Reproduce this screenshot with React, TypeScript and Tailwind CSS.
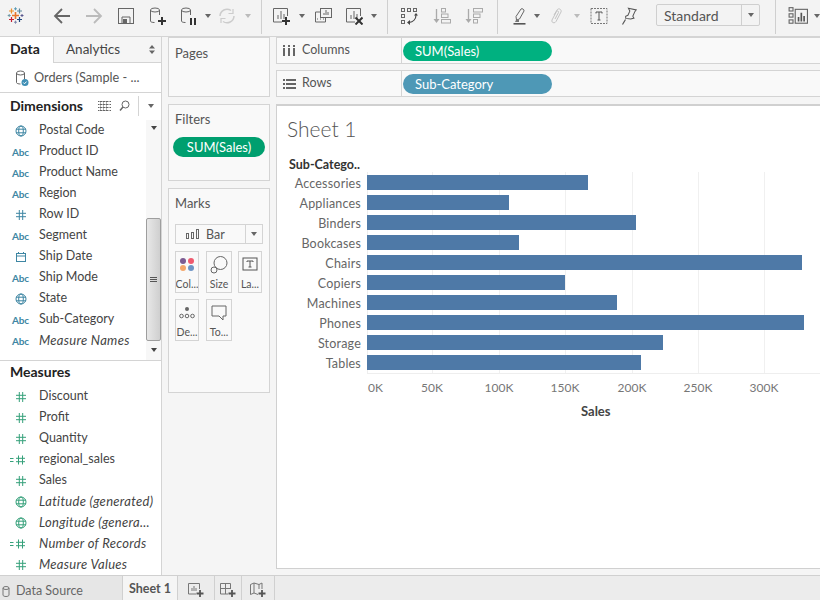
import type { ReactNode } from 'react'

const font = { fontFamily: '"Lato", "Open Sans", sans-serif' }

const bars = [
  { name: 'Accessories', w: 221 },
  { name: 'Appliances', w: 142 },
  { name: 'Binders', w: 269 },
  { name: 'Bookcases', w: 152 },
  { name: 'Chairs', w: 435 },
  { name: 'Copiers', w: 198 },
  { name: 'Machines', w: 250 },
  { name: 'Phones', w: 437 },
  { name: 'Storage', w: 296 },
  { name: 'Tables', w: 274 },
]

const ticks = [
  { label: '50K', x: 65 },
  { label: '100K', x: 132 },
  { label: '150K', x: 198 },
  { label: '200K', x: 265 },
  { label: '250K', x: 331 },
  { label: '300K', x: 397 },
]

type Kind = 'abc' | 'globe' | 'hash' | 'date' | 'calc'

const dimensions: { name: string; kind: Kind; italic?: boolean }[] = [
  { name: 'Postal Code', kind: 'globe' },
  { name: 'Product ID', kind: 'abc' },
  { name: 'Product Name', kind: 'abc' },
  { name: 'Region', kind: 'abc' },
  { name: 'Row ID', kind: 'hash' },
  { name: 'Segment', kind: 'abc' },
  { name: 'Ship Date', kind: 'date' },
  { name: 'Ship Mode', kind: 'abc' },
  { name: 'State', kind: 'globe' },
  { name: 'Sub-Category', kind: 'abc' },
  { name: 'Measure Names', kind: 'abc', italic: true },
]

const measures: { name: string; kind: Kind; italic?: boolean }[] = [
  { name: 'Discount', kind: 'hash' },
  { name: 'Profit', kind: 'hash' },
  { name: 'Quantity', kind: 'hash' },
  { name: 'regional_sales', kind: 'calc' },
  { name: 'Sales', kind: 'hash' },
  { name: 'Latitude (generated)', kind: 'globe', italic: true },
  { name: 'Longitude (genera...', kind: 'globe', italic: true },
  { name: 'Number of Records', kind: 'calc', italic: true },
  { name: 'Measure Values', kind: 'hash', italic: true },
]

function Icon({ children, cls = 'ml-[14px]', size = 18 }: { children: ReactNode; cls?: string; size?: number }) {
  return (
    <svg width={size} height={size} viewBox="0 0 18 18" fill="none" className={`shrink-0 ${cls}`}>
      {children}
    </svg>
  )
}

function Caret({ cls, color = '#666' }: { cls: string; color?: string }) {
  return (
    <svg width="6" height="4" viewBox="0 0 6 4" className={`shrink-0 ${cls}`}>
      <path d="M0 0h6L3 4z" fill={color} />
    </svg>
  )
}

function Sep({ cls }: { cls: string }) {
  return <div className={`w-px h-[34px] self-start bg-[#cfcfcf] shrink-0 ${cls}`} />
}

function Cyl({ stroke = '#666' }: { stroke?: string }) {
  return (
    <>
      <ellipse cx="6" cy="3" rx="4.5" ry="2" stroke={stroke} />
      <path d="M1.500 3v11c0 1 1.500 1.500 4 1.500" stroke={stroke} />
      <path d="M10.500 3v5" stroke={stroke} />
    </>
  )
}

function BarsMini() {
  return <path d="M6 12V8M9 12V4M12 12V7" stroke="#666" />
}

function Plus({ x, y, r, color, w = 1.2 }: { x: number; y: number; r: number; color: string; w?: number }) {
  return <path d={`M${x} ${y - r}v${r * 2}M${x - r} ${y}h${r * 2}`} stroke={color} strokeWidth={w} />
}

function Toolbar() {
  return (
    <div className="h-[36px] flex items-center bg-[#f3f3f3] shrink-0 pb-[4px]">
      <svg width="18" height="18" viewBox="0 0 18 18" className="shrink-0 ml-[7px]">
        <Plus x={8.5} y={8.5} r={3.5} color="#e8762b" w={1.6} />
        <Plus x={4.5} y={4} r={2.5} color="#eb912c" />
        <Plus x={12.5} y={4} r={2.5} color="#5b879b" />
        <Plus x={4.5} y={12.5} r={2.5} color="#c72035" />
        <Plus x={12.5} y={12.5} r={2.5} color="#1f457e" />
        <Plus x={8.5} y={1.800} r={1.500} color="#5b9cb5" w={1} />
        <Plus x={2.200} y={8.500} r={1.500} color="#7099a6" w={1} />
        <Plus x={15} y={8.500} r={1.500} color="#59578e" w={1} />
        <Plus x={8.500} y={15.200} r={1.500} color="#7e86aa" w={1} />
      </svg>
      <Sep cls="ml-[14px]" />
      <Icon cls="ml-[13px]">
        <path d="M17 9H2M9 2 2 9l7 7" stroke="#666" strokeWidth="1.800" />
      </Icon>
      <Icon>
        <path d="M1 9h15M9 2l7 7-7 7" stroke="#bbb" strokeWidth="1.800" />
      </Icon>
      <Icon>
        <rect x="1.500" y="1.500" width="15" height="15" stroke="#666" />
        <path d="M5 16v-6h8v6" stroke="#666" />
        <rect x="6" y="12" width="4" height="4" fill="#666" />
      </Icon>
      <Icon>
        <Cyl />
        <path d="M13 10v8M9 14h8" stroke="#333" strokeWidth="2" />
      </Icon>
      <Icon cls="ml-[13px]">
        <Cyl />
        <path d="M11 11v7M15 11v7" stroke="#333" strokeWidth="2" />
      </Icon>
      <Caret cls="ml-[7px]" />
      <Icon cls="ml-[7px]">
        <path d="M2 9a7 7 0 0 1 11-5.500M16 9a7 7 0 0 1-11 5.500" stroke="#ccc" strokeWidth="1.500" />
        <path d="M15 2v4.500h-4.500M3 16v-4.500h4.500" stroke="#ccc" strokeWidth="1.200" />
      </Icon>
      <Caret cls="ml-[9px]" color="#bbb" />
      <Sep cls="ml-[10px]" />
      <Icon cls="ml-[10px]">
        <path d="M10 15H1.500V1.500h14V9" stroke="#666" />
        <BarsMini />
        <path d="M14 10v8M10 14h8" stroke="#333" strokeWidth="2" />
      </Icon>
      <Caret cls="ml-[9px]" />
      <Icon cls="ml-[9px]">
        <rect x="6.500" y="1.500" width="11" height="9" stroke="#666" fill="#f3f3f3" />
        <path d="M10 8V6M12 8V3M14 8V5" stroke="#666" />
        <path d="M6.500 5h-5v10h10v-4.500" stroke="#666" />
        <path d="M3 12h1M6 12h1M9 12h1" stroke="#666" />
      </Icon>
      <Icon cls="ml-[13px]">
        <path d="M10 15H1.500V1.500h14V9" stroke="#666" />
        <BarsMini />
        <path d="m10.500 10.500 7 7M17.500 10.500l-7 7" stroke="#333" strokeWidth="2" />
      </Icon>
      <Caret cls="ml-[8px]" />
      <Sep cls="ml-[10px]" />
      <Icon cls="ml-[12px]">
        <rect x="1.500" y="1.500" width="3" height="3" stroke="#666" />
        <rect x="7.500" y="1.500" width="3" height="3" stroke="#666" />
        <rect x="13.500" y="1.500" width="3" height="3" stroke="#666" />
        <rect x="1.500" y="7.500" width="3" height="3" stroke="#666" />
        <rect x="1.500" y="13.500" width="3" height="3" stroke="#666" />
        <path d="M16 8c0 4-3 7-7 7.500" stroke="#444" strokeWidth="1.200" />
        <path d="M14 8.500h4l-2-2.500zM10 13v5l-3-2.500z" fill="#444" />
      </Icon>
      <Icon cls="ml-[15px]">
        <path d="M3.500 2v12" stroke="#aaa" strokeWidth="1.300" />
        <path d="M.5 12h6l-3 4z" fill="#aaa" />
        <rect x="8.500" y="1.500" width="4" height="3.500" stroke="#aaa" />
        <rect x="8.500" y="7" width="6.500" height="3.500" stroke="#aaa" />
        <rect x="8.500" y="12.500" width="9" height="3.500" stroke="#aaa" />
      </Icon>
      <Icon>
        <path d="M3.500 2v12" stroke="#aaa" strokeWidth="1.300" />
        <path d="M.5 12h6l-3 4z" fill="#aaa" />
        <rect x="8.500" y="1.500" width="9" height="3.500" stroke="#aaa" />
        <rect x="8.500" y="7" width="6.500" height="3.500" stroke="#aaa" />
        <rect x="8.500" y="12.500" width="4" height="3.500" stroke="#aaa" />
      </Icon>
      <Sep cls="ml-[14px]" />
      <Icon cls="ml-[13px]">
        <path d="M5.500 13 5 9.500 10 2c1-1 3.500.500 3 2L8.500 12z" stroke="#666" />
        <path d="M5 13h3v2H4z" fill="#777" />
        <path d="M2.500 16.800h12" stroke="#555" strokeWidth="1.600" />
      </Icon>
      <Caret cls="ml-[5px]" />
      <Icon cls="ml-[8px]">
        <path d="M6 8 9 3c1.500-2.500 5-.5 4 2l-5 9.500c-1.500 2.500-5 1-4-1.500l4.500-8.500c.8-1.200 2.500-.3 2 1L7 12" stroke="#c4c4c4" />
      </Icon>
      <Caret cls="ml-[8px]" color="#bbb" />
      <Icon cls="ml-[10px]">
        <rect x="1" y="1.500" width="16" height="15" stroke="#777" strokeDasharray="2 1" />
        <path d="M6 6.500V5h6v1.500M9 5v8M7.500 13h3" stroke="#555" />
      </Icon>
      <Icon cls="ml-[12px]">
        <path d="M7 1.500h8l-1 2-1 5 1.500 1.500-3 1.500-5 .5-.5-2 2-1.500 1-4.500z" stroke="#555" transform="rotate(12 9 8)" />
        <path d="m5.500 12.500-3 5" stroke="#555" strokeWidth="1.200" />
      </Icon>
      <div className="ml-[18px] -mt-[2px] w-[104px] h-[22px] shrink-0 flex items-center border border-[#cfcfcf] rounded-[2px] text-[14px] text-[#555]">
        <span className="pl-[7px] flex-1">Standard</span>
        <div className="w-[18px] h-full border-l border-[#cfcfcf] flex items-center justify-center">
          <Caret cls="" />
        </div>
      </div>
      <Sep cls="ml-[15px]" />
      <Icon cls="ml-[12px]" size={20}>
        <rect x="1" y="1.500" width="3.500" height="3" stroke="#666" />
        <rect x="1" y="7" width="3.500" height="3" stroke="#666" />
        <rect x="1" y="12.500" width="3.500" height="3" stroke="#666" />
        <rect x="6.500" y="3" width="11" height="12.500" stroke="#666" />
        <path d="M9.500 14V10M12 14V6M14.500 14V9" stroke="#555" strokeWidth="1.500" />
      </Icon>
      <Caret cls="ml-[6px]" />
    </div>
  )
}

function FieldIcon({ kind, color }: { kind: Kind; color: string }) {
  if (kind === 'abc') {
    return <span className="text-[10px] leading-none font-bold tracking-[-0.2px]" style={{ color }}>Abc</span>
  }
  if (kind === 'globe') {
    return (
      <svg width="12" height="12" viewBox="0 0 12 12" fill="none" stroke={color}>
        <circle cx="6" cy="6" r="5" />
        <ellipse cx="6" cy="6" rx="2.300" ry="5" />
        <path d="M1 4.200h10M1 7.800h10" />
      </svg>
    )
  }
  if (kind === 'date') {
    return (
      <svg width="12" height="12" viewBox="0 0 12 12" fill="none" stroke={color}>
        <rect x="1.500" y="2.500" width="9" height="8" />
        <path d="M1.500 5h9M3.500 1v2M8.500 1v2" />
      </svg>
    )
  }
  if (kind === 'calc') {
    return (
      <svg width="18" height="12" viewBox="0 0 18 12" fill="none" stroke={color} className="-ml-[4px]">
        <path d="M8.500 1.500v9M12.500 1.500v9M6 4.300h9M6 7.700h9" />
        <path d="M0 4.500h3.500M0 7.500h3.500" />
      </svg>
    )
  }
  return (
    <svg width="12" height="12" viewBox="0 0 12 12" fill="none" stroke={color}>
      <path d="M4.300 1v10M7.700 1v10M1 4.300h10M1 7.700h10" />
    </svg>
  )
}

function Field({ name, kind, italic, color }: { name: string; kind: Kind; italic?: boolean; color: string }) {
  return (
    <div className="h-[21px] flex items-center">
      <div className="w-[39px] shrink-0 flex justify-center pl-[2px]">
        <FieldIcon kind={kind} color={color} />
      </div>
      <span className={`whitespace-nowrap text-[#444] ${italic ? 'italic text-[13px] tracking-[0.3px]' : 'text-[12.500px]'}`}>{name}</span>
    </div>
  )
}

function DataPane() {
  return (
    <div className="w-[162px] shrink-0 bg-white border-r border-[#d4d4d4] flex flex-col">
      <div className="h-[26px] flex text-[13.500px] text-[#444] border-b border-[#d4d4d4]">
        <div className="w-[53px] pl-[10px] font-bold text-[#222] text-[14px] leading-[24px] h-[26px] bg-white">Data</div>
        <div className="flex-1 flex items-center pl-[12px] pr-[6px] justify-between bg-[#f5f5f5] border-l border-[#d4d4d4]">
          <span>Analytics</span>
          <svg width="6" height="9" viewBox="0 0 6 9">
            <path d="M0 3.500h6L3 0zM0 5.500h6L3 9z" fill="#666" />
          </svg>
        </div>
      </div>
      <div className="h-[30px] shrink-0 flex items-center pl-[15px] border-b border-[#d4d4d4]">
        <svg width="14" height="16" viewBox="0 0 14 16" fill="none" className="shrink-0">
          <ellipse cx="5.500" cy="3" rx="4" ry="2" stroke="#666" />
          <path d="M1.500 3v9.500c0 1 2 1.500 4 1.500M9.500 3v6" stroke="#666" />
          <circle cx="10" cy="12.500" r="3.500" fill="#3f8fb5" />
          <path d="m8.300 12.500 1.200 1.300 2-2.200" stroke="#fff" />
        </svg>
        <span className="ml-[5px] text-[12.700px] text-[#555] whitespace-nowrap">Orders (Sample - ...</span>
      </div>
      <div className="h-[27px] shrink-0 flex items-center pl-[10px] pb-[2px]">
        <span className="text-[14px] font-bold text-[#222] flex-1">Dimensions</span>
        <svg width="13" height="10" viewBox="0 0 13 10" stroke="#666" className="shrink-0">
          <path d="M0 .5h13M0 3.500h13M0 6.500h13M0 9.500h13M2.500 0v10M5.500 0v10M8.500 0v10" strokeWidth="1" strokeDasharray="1 .5" />
        </svg>
        <svg width="11" height="11" viewBox="0 0 11 11" fill="none" stroke="#666" className="ml-[8px] shrink-0">
          <circle cx="6.500" cy="4.500" r="3.500" />
          <path d="M4 7 1 10.500" strokeWidth="1.500" />
        </svg>
        <div className="w-px h-[20px] bg-[#d4d4d4] ml-[8px]" />
        <Caret cls="ml-[9px] mr-[7px]" />
      </div>
      <div className="h-[241px] shrink-0 flex border-b border-[#d4d4d4]">
        <div className="flex-1 min-w-0 overflow-hidden">
          {dimensions.map((f) => (
            <Field key={f.name} {...f} color="#3e86a3" />
          ))}
        </div>
        <div className="w-[15px] shrink-0 flex flex-col items-center bg-[#f7f7f7] pt-[6px]">
          <Caret cls="" color="#444" />
          <div className="mt-[88px] w-[15px] h-[123px] bg-gradient-to-r from-[#e8e8e8] to-[#cfcfcf] border border-[#9e9e9e] rounded-[2px] flex flex-col items-center justify-center gap-[1px]">
            <div className="w-[7px] h-px bg-[#555]" />
            <div className="w-[7px] h-px bg-[#555]" />
            <div className="w-[7px] h-px bg-[#555]" />
          </div>
          <Caret cls="mt-[7px]" color="#444" />
        </div>
      </div>
      <div className="h-[25px] shrink-0 pl-[10px] text-[14px] leading-[22px] font-bold text-[#222]">Measures</div>
      <div>
        {measures.map((f) => (
          <Field key={f.name} {...f} color="#35a07a" />
        ))}
      </div>
    </div>
  )
}

function MarkButton({ label, children, cls }: { label: string; children: ReactNode; cls: string }) {
  return (
    <div className={`h-[42px] shrink-0 border border-[#d4d4d4] flex flex-col items-center pt-[3px] overflow-hidden ${cls}`}>
      <svg width="20" height="20" viewBox="0 0 20 20" fill="none">
        {children}
      </svg>
      <span className="text-[10.500px] leading-[14px] text-[#555] mt-[2px]">{label}</span>
    </div>
  )
}

function Cards() {
  return (
    <div className="w-[102px] shrink-0 ml-[6px] flex flex-col">
      <div className="h-[60px] shrink-0 border border-[#d4d4d4] bg-[#f9f9f9] pl-[6px] pt-[6px] text-[13px] text-[#555]">Pages</div>
      <div className="mt-[7px] h-[77px] shrink-0 border border-[#d4d4d4] bg-[#f9f9f9] pt-[4px] text-[13px] leading-[20px] text-[#555]">
        <div className="pl-[6px]">Filters</div>
        <div className="mt-[8px] ml-[4px] w-[92px] h-[20px] rounded-full bg-[#009f6f] text-white text-[13px] leading-[20px] text-center">SUM(Sales)</div>
      </div>
      <div className="mt-[7px] h-[205px] shrink-0 border border-[#d4d4d4] bg-[#f9f9f9] px-[6px] pt-[4px] text-[13px] leading-[20px] text-[#555]">
        <div>Marks</div>
        <div className="mt-[11px] h-[20px] border border-[#d4d4d4] flex items-center bg-[#f9f9f9]">
          <svg width="14" height="10" viewBox="0 0 14 10" fill="none" stroke="#666" className="ml-[10px]">
            <rect x=".5" y="4.500" width="2" height="5" />
            <rect x="5.500" y="3.500" width="2" height="6" />
            <rect x="10.500" y=".5" width="2" height="9" />
          </svg>
          <span className="ml-[6px] flex-1 text-[12.500px] pt-[1px]">Bar</span>
          <div className="w-[17px] h-full border-l border-[#d4d4d4] flex items-center justify-center">
            <Caret cls="" />
          </div>
        </div>
        <div className="mt-[7px] flex">
          <MarkButton label="Col..." cls="w-[24px]">
            <circle cx="6" cy="6" r="3" fill="#7b5b92" />
            <circle cx="14" cy="6" r="3" fill="#ef5a6e" />
            <circle cx="6" cy="13" r="3" fill="#f4a66a" />
            <circle cx="14" cy="13" r="3" fill="#6d94c5" />
          </MarkButton>
          <MarkButton label="Size" cls="w-[26px] ml-[7px]">
            <circle cx="11.500" cy="8" r="6.500" stroke="#666" />
            <circle cx="5" cy="15" r="3" stroke="#666" fill="#f9f9f9" />
          </MarkButton>
          <MarkButton label="La..." cls="w-[24px] ml-[6px]">
            <rect x="3" y="3" width="14" height="12" stroke="#555" />
            <path d="M7 7V6h6v1M10 6v6M8.500 12h3" stroke="#555" />
          </MarkButton>
        </div>
        <div className="mt-[6px] flex">
          <MarkButton label="De..." cls="w-[24px]">
            <circle cx="10" cy="6" r="2" fill="#666" />
            <circle cx="4.500" cy="13" r="1.800" stroke="#666" />
            <circle cx="10" cy="13" r="1.800" stroke="#666" />
            <circle cx="15.500" cy="13" r="1.800" stroke="#666" />
          </MarkButton>
          <MarkButton label="To..." cls="w-[26px] ml-[7px]">
            <path d="M3 3h14v10h-3v4l-4-4H3z" stroke="#666" />
          </MarkButton>
        </div>
      </div>
    </div>
  )
}

function Shelf({ label, icon, pill, pillCls }: { label: string; icon: ReactNode; pill: string; pillCls: string }) {
  return (
    <div className="h-[27px] shrink-0 flex border-y border-l border-[#d4d4d4] bg-[#f9f9f9]">
      <div className="w-[125px] shrink-0 flex items-center border-r border-[#d4d4d4] pl-[6px] text-[12.500px] text-[#555]">
        <span className="w-[19px]">{icon}</span>
        <span>{label}</span>
      </div>
      <div className="flex items-center pl-[1px]">
        <div className={`w-[149px] h-[20px] rounded-full text-white text-[13px] leading-[20px] pl-[12px] ${pillCls}`}>{pill}</div>
      </div>
    </div>
  )
}

function Chart() {
  return (
    <div className="mt-[7px] flex-1 min-h-0 bg-white border-t-2 border-l border-b border-[#d0d0d0] flex flex-col">
      <div className="pl-[10px] pt-[10px] h-[49px] text-[21px] leading-[25px] font-light text-[#555] shrink-0">Sheet 1</div>
      <div className="pl-[12px] pt-[1px] h-[18px] text-[12.500px] font-bold leading-[18px] text-[#333] shrink-0">Sub-Catego..</div>
      <div className="flex shrink-0">
        <div className="w-[84px] shrink-0 text-right pt-[1px] h-[200px]">
          {bars.map((b) => (
            <div key={b.name} className="h-[20px] text-[12.500px] tracking-[0.2px] leading-[20px] text-[#666]">{b.name}</div>
          ))}
        </div>
        <div className="relative flex-1 ml-[6px] border-b border-[#eeeeee]">
          {ticks.map((t) => (
            <div key={t.label} className="absolute -top-[1px] bottom-0 w-px bg-[#f0f0f0]" style={{ left: t.x }} />
          ))}
          <div className="absolute -top-[1px] bottom-0 left-0 w-px bg-[#eeeeee]" />
          <div className="relative">
            {bars.map((b) => (
              <div key={b.name} className="h-[20px] pt-[2px]">
                <div className="h-[15px] bg-[#4e79a7]" style={{ width: b.w }} />
              </div>
            ))}
          </div>
          <div className="absolute left-0 right-0 top-[200px] h-[40px] text-[12px] text-[#777]">
            <span className="absolute top-[6px] left-[1px]">0K</span>
            {ticks.map((t) => (
              <span key={t.label} className="absolute top-[6px] -translate-x-1/2" style={{ left: t.x }}>{t.label}</span>
            ))}
          </div>
        </div>
      </div>
      <div className="mt-[28px] pl-[304px] text-[13px] font-bold text-[#444] shrink-0">Sales</div>
    </div>
  )
}

function TabIcon({ children, cls }: { children: ReactNode; cls: string }) {
  return (
    <div className={`h-full flex items-center justify-center border-r border-[#d0d0d0] shrink-0 pt-[4px] ${cls}`}>
      <svg width="18" height="16" viewBox="0 0 18 16" fill="none">
        {children}
      </svg>
    </div>
  )
}

function BottomBar() {
  return (
    <div className="h-[25px] shrink-0 flex bg-[#ececec] border-t border-[#d0d0d0] text-[12.500px] text-[#666]">
      <div className="w-[123px] shrink-0 flex items-center pl-[2px] pt-[6px] border-r border-[#d0d0d0] bg-[#e6e6e6]">
        <svg width="8" height="11" viewBox="0 0 8 11" fill="none" stroke="#777">
          <ellipse cx="4" cy="2" rx="3" ry="1.500" />
          <path d="M1 2v7c0 2 6 2 6 0V2" />
        </svg>
        <span className="ml-[6px]">Data Source</span>
      </div>
      <div className="w-[55px] shrink-0 flex items-center justify-center pt-[3px] bg-[#f5f5f5] font-bold text-[#555] text-[12.500px] border-r border-[#d0d0d0]">Sheet 1</div>
      <TabIcon cls="w-[37px]">
        <path d="M9 12H1.500V1.500h11V7" stroke="#777" />
        <path d="M5 9V6M7 9V4M9 9V6" stroke="#777" />
        <path d="M13 8v7M9.500 11.500h7" stroke="#555" strokeWidth="1.800" />
      </TabIcon>
      <TabIcon cls="w-[27px]">
        <path d="M9 12H1.500V1.500h10V7M1.500 6.500h10M6.500 1.500V12" stroke="#777" />
        <path d="M13 8v7M9.500 11.500h7" stroke="#555" strokeWidth="1.800" />
      </TabIcon>
      <TabIcon cls="w-[33px]">
        <path d="M9 12.500 5 11 1.500 12.500V2.500L5 1l5 1.500L13 1v6M5 1v10M10 2.500V7" stroke="#777" />
        <path d="M13 8v7M9.500 11.500h7" stroke="#555" strokeWidth="1.800" />
      </TabIcon>
    </div>
  )
}

export default function App() {
  return (
    <div className="w-[820px] h-[600px] overflow-hidden bg-[#f5f5f5] flex flex-col" style={font}>
      <Toolbar />
      <div className="flex-1 min-h-0 flex border-t border-[#d4d4d4]">
        <DataPane />
        <Cards />
        <div className="flex-1 min-w-0 ml-[6px] flex flex-col pb-[6px]">
          <Shelf
            label="Columns"
            pill="SUM(Sales)"
            pillCls="bg-[#00b180]"
            icon={
              <svg width="12" height="11" viewBox="0 0 12 11" fill="#666">
                <rect x="0" y="3" width="2" height="8" />
                <rect x="5" y="3" width="2" height="8" />
                <rect x="10" y="3" width="2" height="8" />
                <rect x="0" y="0" width="2" height="2" />
                <rect x="5" y="0" width="2" height="2" />
                <rect x="10" y="0" width="2" height="2" />
              </svg>
            }
          />
          <div className="h-[6px] shrink-0" />
          <Shelf
            label="Rows"
            pill="Sub-Category"
            pillCls="bg-[#4e98b6]"
            icon={
              <svg width="13" height="10" viewBox="0 0 13 10" fill="#666">
                <rect x="0" y="0" width="2" height="2" />
                <rect x="0" y="4" width="2" height="2" />
                <rect x="0" y="8" width="2" height="2" />
                <rect x="3" y="0" width="10" height="2" />
                <rect x="3" y="4" width="10" height="2" />
                <rect x="3" y="8" width="10" height="2" />
              </svg>
            }
          />
          <Chart />
        </div>
      </div>
      <BottomBar />
    </div>
  )
}
